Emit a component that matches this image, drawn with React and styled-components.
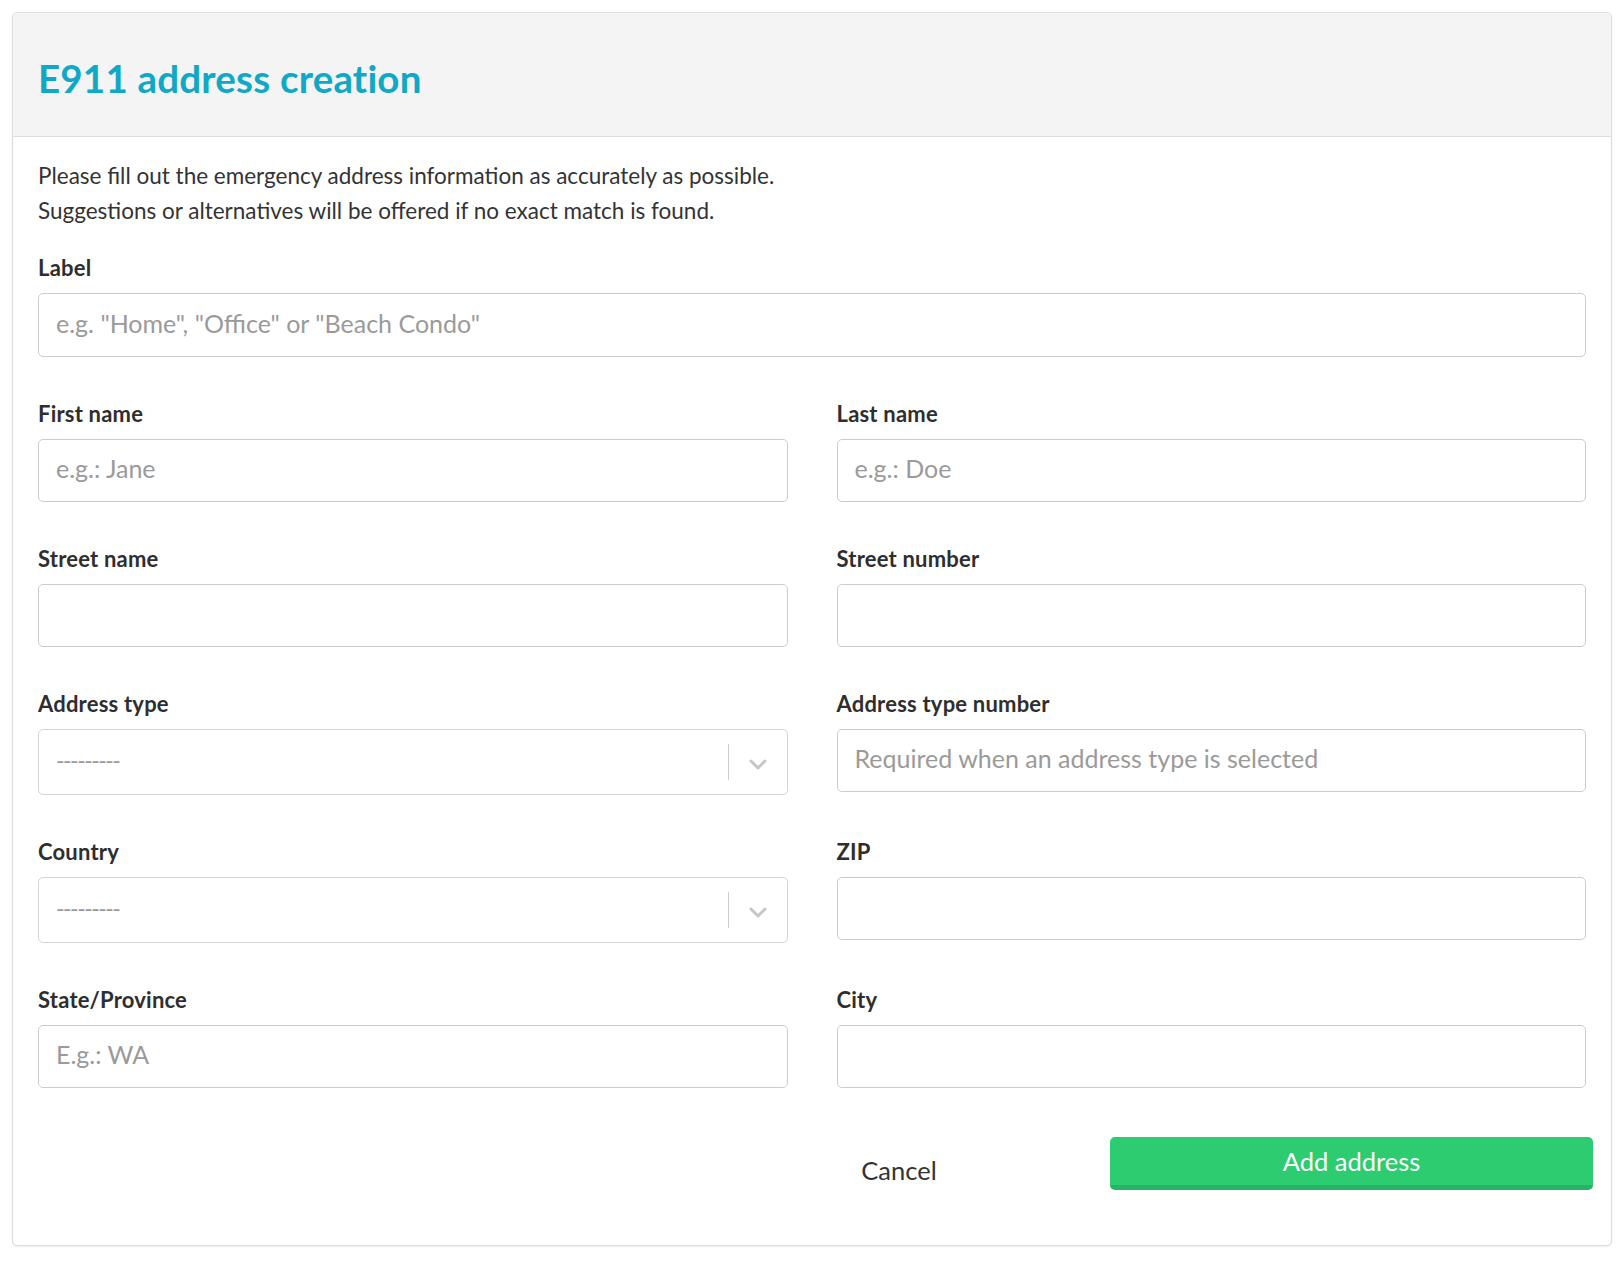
import React from "react";
import styled, { createGlobalStyle } from "styled-components";

const Global = createGlobalStyle`
  * { box-sizing: border-box; }
  html, body { margin: 0; padding: 0; background: #ffffff; }
  body {
    font-family: Lato, "Noto Sans", "Liberation Sans", sans-serif;
    color: #333333;
  }
  #root { padding: 12px; }
`;

const Card = styled.section`
  border: 1px solid #dddddd;
  border-radius: 5px;
  background: #ffffff;
  box-shadow: 0 1px 2px rgba(0, 0, 0, 0.08);
  overflow: hidden;
`;

const Header = styled.header`
  height: 124px;
  display: flex;
  align-items: center;
  padding: 6px 25px 0;
  background: #f4f4f4;
  border-bottom: 1px solid #dcdcdc;
`;

const Title = styled.h1`
  margin: 0;
  font-size: 38.5px;
  font-weight: 700;
  color: #0fa8c5;
  letter-spacing: 0.2px;
`;

const Body = styled.div`
  padding: 21px 25px 55px;
`;

const Intro = styled.p`
  margin: 0 0 28px;
  font-size: 22.5px;
  line-height: 35px;
  color: #333333;
`;

const Form = styled.form`
  display: flex;
  flex-direction: column;
  gap: 45px;
`;

const Row = styled.div`
  display: grid;
  grid-template-columns: ${(p) => (p.$single ? "1fr" : "1fr 1fr")};
  column-gap: 49px;
  align-items: start;
`;

const Field = styled.div`
  display: flex;
  flex-direction: column;
  gap: 13px;
`;

const Label = styled.label`
  font-size: 22px;
  line-height: 24px;
  font-weight: 700;
  letter-spacing: 0.2px;
  color: #2e2e2e;
`;

const Input = styled.input`
  height: ${(p) => (p.$tall ? "64px" : "63px")};
  width: 100%;
  padding: 0 17px 5px;
  border: 1px solid #cccccc;
  border-radius: 5px;
  font-family: inherit;
  font-size: 25px;
  color: #333333;
  background: #ffffff;
  outline: none;
  &::placeholder {
    color: #9a9a9a;
  }
`;

const SelectControl = styled.div`
  height: 66px;
  display: flex;
  align-items: center;
  border: 1px solid #d4d4d4;
  border-radius: 5px;
  background: #ffffff;
  cursor: pointer;
`;

const SelectValue = styled.span`
  flex: 1;
  padding: 0 17px 4px;
  font-size: 23px;
  color: #9a9a9a;
  letter-spacing: -1.5px;
`;

const Separator = styled.span`
  width: 1px;
  align-self: stretch;
  margin: 14px 0;
  background: #cccccc;
`;

const Indicator = styled.span`
  width: 58px;
  display: flex;
  align-items: center;
  justify-content: center;
  color: #c6c6c6;
  padding-top: 4px;
`;

const Footer = styled.div`
  display: flex;
  justify-content: flex-end;
  align-items: center;
  margin: 49px -7px 0 0;
`;

const CancelButton = styled.button`
  width: 126px;
  margin-right: 148px;
  padding: 12px 0 0;
  border: none;
  background: transparent;
  font-family: inherit;
  font-size: 25.5px;
  color: #333333;
  cursor: pointer;
`;

const PrimaryButton = styled.button`
  width: 483px;
  height: 53px;
  padding: 0;
  border: none;
  border-bottom: 5px solid #27b363;
  border-radius: 5px;
  background: #2ecc71;
  font-family: inherit;
  font-size: 25.5px;
  color: #ffffff;
  cursor: pointer;
`;

const Chevron = () => (
  <svg width="18" height="11" viewBox="0 0 18 11" fill="none">
    <path
      d="M2 2l7 7 7-7"
      stroke="currentColor"
      strokeWidth="3"
      strokeLinecap="round"
      strokeLinejoin="round"
    />
  </svg>
);

const Select = ({ id }) => (
  <SelectControl id={id} role="combobox" aria-expanded="false">
    <SelectValue>---------</SelectValue>
    <Separator />
    <Indicator>
      <Chevron />
    </Indicator>
  </SelectControl>
);

const TextField = ({ id, label, placeholder, tall }) => (
  <Field>
    <Label htmlFor={id}>{label}</Label>
    <Input id={id} placeholder={placeholder} $tall={tall} />
  </Field>
);

const SelectField = ({ id, label }) => (
  <Field>
    <Label htmlFor={id}>{label}</Label>
    <Select id={id} />
  </Field>
);

export default function App() {
  return (
    <>
      <Global />
      <Card>
        <Header>
          <Title>E911 address creation</Title>
        </Header>
        <Body>
          <Intro>
            Please fill out the emergency address information as accurately as possible.
            <br />
            Suggestions or alternatives will be offered if no exact match is found.
          </Intro>
          <Form onSubmit={(e) => e.preventDefault()}>
            <Row $single>
              <TextField
                id="label"
                label="Label"
                placeholder={'e.g. "Home", "Office" or "Beach Condo"'}
                tall
              />
            </Row>
            <Row>
              <TextField id="first" label="First name" placeholder="e.g.: Jane" />
              <TextField id="last" label="Last name" placeholder="e.g.: Doe" />
            </Row>
            <Row>
              <TextField id="street" label="Street name" />
              <TextField id="number" label="Street number" />
            </Row>
            <Row>
              <SelectField id="type" label="Address type" />
              <TextField
                id="typenum"
                label="Address type number"
                placeholder="Required when an address type is selected"
              />
            </Row>
            <Row>
              <SelectField id="country" label="Country" />
              <TextField id="zip" label="ZIP" />
            </Row>
            <Row>
              <TextField id="state" label="State/Province" placeholder="E.g.: WA" />
              <TextField id="city" label="City" />
            </Row>
          </Form>
          <Footer>
            <CancelButton type="button">Cancel</CancelButton>
            <PrimaryButton type="button">Add address</PrimaryButton>
          </Footer>
        </Body>
      </Card>
    </>
  );
}
